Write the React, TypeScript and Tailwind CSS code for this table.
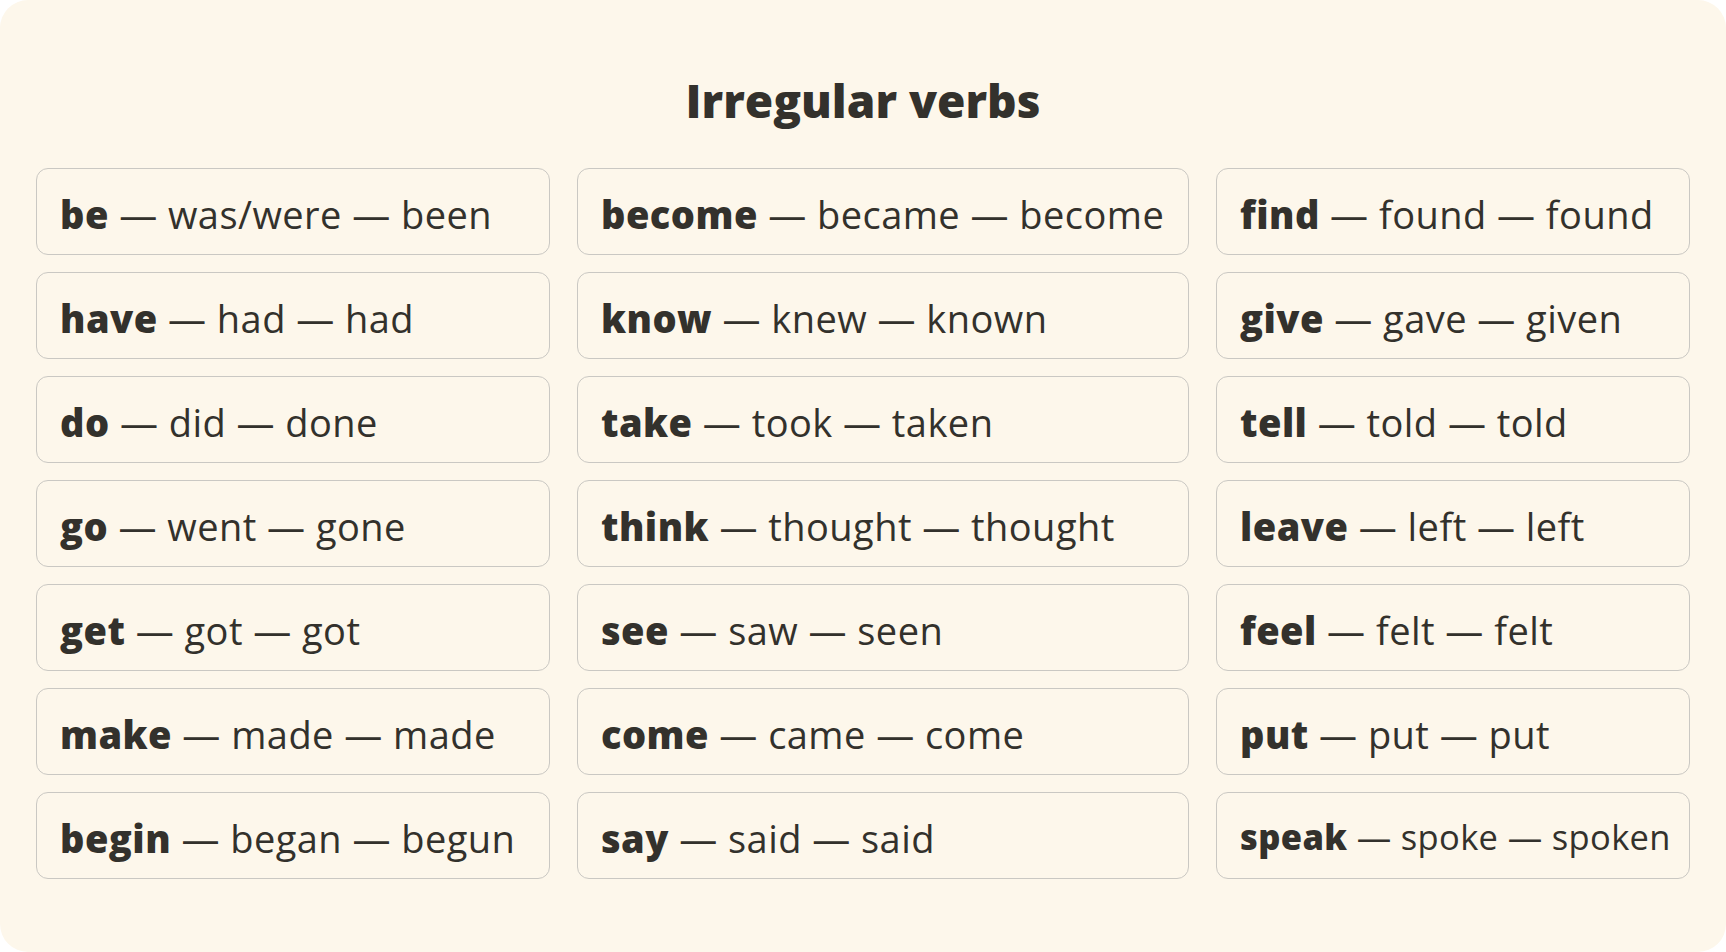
import React from "react";

const col1: [string, string, string][] = [
  ["be", "was/were", "been"],
  ["have", "had", "had"],
  ["do", "did", "done"],
  ["go", "went", "gone"],
  ["get", "got", "got"],
  ["make", "made", "made"],
  ["begin", "began", "begun"],
];
const col2: [string, string, string][] = [
  ["become", "became", "become"],
  ["know", "knew", "known"],
  ["take", "took", "taken"],
  ["think", "thought", "thought"],
  ["see", "saw", "seen"],
  ["come", "came", "come"],
  ["say", "said", "said"],
];
const col3: [string, string, string][] = [
  ["find", "found", "found"],
  ["give", "gave", "given"],
  ["tell", "told", "told"],
  ["leave", "left", "left"],
  ["feel", "felt", "felt"],
  ["put", "put", "put"],
  ["speak", "spoke", "spoken"],
];

function Cell({ v, small }: { v: [string, string, string]; small?: boolean }) {
  return (
    <div className="h-[87px] rounded-[12px] border-[1.5px] border-[#cac8c3] flex items-center pl-[23px] pr-[12px] whitespace-nowrap">
      <span
        className={
          small
            ? "text-[34.5px] leading-none tracking-[0.01em] pt-[3px]"
            : "text-[38px] leading-none tracking-[0.012em] pt-[4px]"
        }
      >
        <b className="font-extrabold">{v[0]}</b> — {v[1]} — {v[2]}
      </span>
    </div>
  );
}

export default function App() {
  const rows = col1.map((_, i) => i);
  return (
    <div className="w-[1726px] h-[952px] bg-white">
      <div
        className="w-full h-full bg-[#fdf7eb] rounded-[28px] text-[#33312c] pt-[70px]"
        style={{ fontFamily: "'Open Sans', 'Noto Sans', sans-serif" }}
      >
        <h1 className="text-center text-[46px] leading-[60px] font-extrabold">Irregular verbs</h1>
        <div className="mt-[38px] mx-[36px] grid grid-cols-[514px_612px_474px] gap-x-[27px] gap-y-[17px]">
          {rows.map((i) => (
            <React.Fragment key={i}>
              <Cell v={col1[i]} />
              <Cell v={col2[i]} />
              <Cell v={col3[i]} small={i === 6} />
            </React.Fragment>
          ))}
        </div>
      </div>
    </div>
  );
}
